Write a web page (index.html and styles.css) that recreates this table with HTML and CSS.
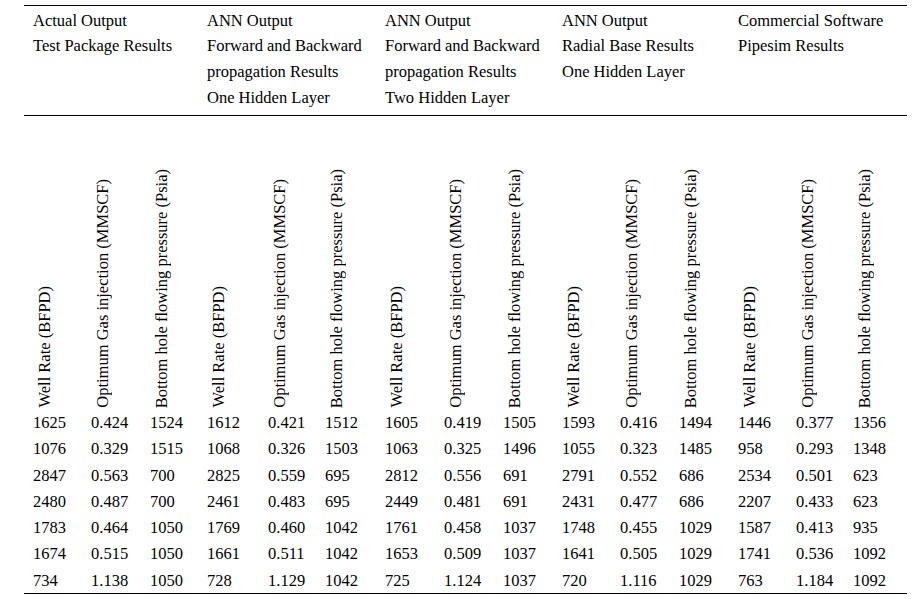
FILE: index.html
```html
<!DOCTYPE html>
<html>
<head>
<meta charset="utf-8">
<link rel="stylesheet" href="styles.css">
</head>
<body>
<table class="results">
  <colgroup>
    <col class="w58"><col class="w59"><col class="w57">
    <col class="w61"><col class="w57"><col class="w60">
    <col class="w59"><col class="w59"><col class="w59">
    <col class="w58"><col class="w59"><col class="w59">
    <col class="w58"><col class="w57"><col class="w63">
  </colgroup>
  <thead>
    <tr class="group-row">
      <th colspan="3">Actual Output<br>Test Package Results</th>
      <th colspan="3">ANN Output<br>Forward and Backward<br>propagation Results<br>One Hidden Layer</th>
      <th colspan="3">ANN Output<br>Forward and Backward<br>propagation Results<br>Two Hidden Layer</th>
      <th colspan="3">ANN Output<br>Radial Base Results<br>One Hidden Layer</th>
      <th colspan="3">Commercial Software<br>Pipesim Results</th>
    </tr>
    <tr class="label-row">
      <th><div class="vlabel">Well Rate (BFPD)</div></th>
      <th><div class="vlabel">Optimum Gas injection (MMSCF)</div></th>
      <th><div class="vlabel">Bottom hole flowing pressure (Psia)</div></th>
      <th><div class="vlabel">Well Rate (BFPD)</div></th>
      <th><div class="vlabel">Optimum Gas injection (MMSCF)</div></th>
      <th><div class="vlabel">Bottom hole flowing pressure (Psia)</div></th>
      <th><div class="vlabel">Well Rate (BFPD)</div></th>
      <th><div class="vlabel">Optimum Gas injection (MMSCF)</div></th>
      <th><div class="vlabel">Bottom hole flowing pressure (Psia)</div></th>
      <th><div class="vlabel">Well Rate (BFPD)</div></th>
      <th><div class="vlabel">Optimum Gas injection (MMSCF)</div></th>
      <th><div class="vlabel">Bottom hole flowing pressure (Psia)</div></th>
      <th><div class="vlabel">Well Rate (BFPD)</div></th>
      <th><div class="vlabel">Optimum Gas injection (MMSCF)</div></th>
      <th><div class="vlabel">Bottom hole flowing pressure (Psia)</div></th>
    </tr>
  </thead>
  <tbody>
    <tr><td>1625</td><td>0.424</td><td>1524</td><td>1612</td><td>0.421</td><td>1512</td><td>1605</td><td>0.419</td><td>1505</td><td>1593</td><td>0.416</td><td>1494</td><td>1446</td><td>0.377</td><td>1356</td></tr>
    <tr><td>1076</td><td>0.329</td><td>1515</td><td>1068</td><td>0.326</td><td>1503</td><td>1063</td><td>0.325</td><td>1496</td><td>1055</td><td>0.323</td><td>1485</td><td>958</td><td>0.293</td><td>1348</td></tr>
    <tr><td>2847</td><td>0.563</td><td>700</td><td>2825</td><td>0.559</td><td>695</td><td>2812</td><td>0.556</td><td>691</td><td>2791</td><td>0.552</td><td>686</td><td>2534</td><td>0.501</td><td>623</td></tr>
    <tr><td>2480</td><td>0.487</td><td>700</td><td>2461</td><td>0.483</td><td>695</td><td>2449</td><td>0.481</td><td>691</td><td>2431</td><td>0.477</td><td>686</td><td>2207</td><td>0.433</td><td>623</td></tr>
    <tr><td>1783</td><td>0.464</td><td>1050</td><td>1769</td><td>0.460</td><td>1042</td><td>1761</td><td>0.458</td><td>1037</td><td>1748</td><td>0.455</td><td>1029</td><td>1587</td><td>0.413</td><td>935</td></tr>
    <tr><td>1674</td><td>0.515</td><td>1050</td><td>1661</td><td>0.511</td><td>1042</td><td>1653</td><td>0.509</td><td>1037</td><td>1641</td><td>0.505</td><td>1029</td><td>1741</td><td>0.536</td><td>1092</td></tr>
    <tr><td>734</td><td>1.138</td><td>1050</td><td>728</td><td>1.129</td><td>1042</td><td>725</td><td>1.124</td><td>1037</td><td>720</td><td>1.116</td><td>1029</td><td>763</td><td>1.184</td><td>1092</td></tr>
  </tbody>
</table>
</body>
</html>
```

FILE: styles.css
```css
html, body {
  margin: 0;
  padding: 0;
  background: #ffffff;
}

body {
  font-family: "Liberation Serif", "Times New Roman", serif;
  font-size: 16.5px;
  color: #000000;
}

.results {
  margin: 5px 0 0 24px;
  width: 883px;
  table-layout: fixed;
  border-collapse: collapse;
  border-top: 1px solid #000;
  border-bottom: 1px solid #000;
}

.w57 { width: 57px; }
.w58 { width: 58px; }
.w59 { width: 59px; }
.w60 { width: 60px; }
.w61 { width: 61px; }
.w63 { width: 63px; }

.results th,
.results td {
  padding: 0 0 0 9px;
  text-align: left;
  font-weight: normal;
  white-space: nowrap;
}

.group-row th {
  vertical-align: top;
  line-height: 25.8px;
  padding-top: 1.5px;
  padding-bottom: 4.3px;
  border-bottom: 1px solid #000;
}

.label-row th {
  height: 292px;
  vertical-align: bottom;
  padding-left: 12px;
  padding-bottom: 1px;
}

.vlabel {
  writing-mode: vertical-rl;
  transform: rotate(180deg);
  line-height: 18px;
  white-space: nowrap;
}

.results td {
  height: 25.3px;
  line-height: 25.3px;
  padding-top: 1px;
  vertical-align: top;
}
```
